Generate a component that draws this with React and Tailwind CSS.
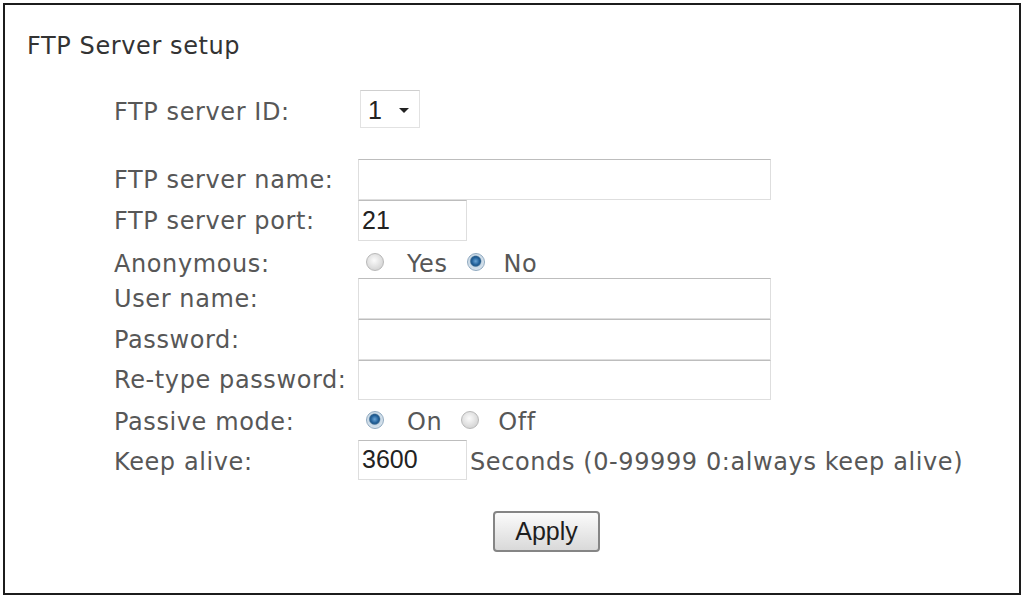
// FTP Server setup form
const LABEL = 'text-[#575757] text-[24px] leading-[30px] tracking-[0.6px]';
const ARIAL = "font-['Liberation_Sans',Arial,sans-serif]";

function Radio({ checked }) {
  return checked ? (
    <span className="inline-block w-[18px] h-[18px] rounded-full border border-[#8fa9c0] bg-[radial-gradient(circle_at_48%_45%,#6aa5d6_0%,#1f5d96_32%,#2b5f8c_40%,#c9d9e6_50%,#eef2f6_100%)]" />
  ) : (
    <span className="inline-block w-[18px] h-[18px] rounded-full border border-[#b8b8b8] bg-[radial-gradient(circle_at_45%_40%,#fbfbfb_0%,#e4e4e4_45%,#c8c8c8_100%)]" />
  );
}

function Field({ w = 'w-[413px]', h = 'h-[41px]', value = '' }) {
  return (
    <div className={`${w} ${h} border border-[#dedede] border-t-[#bdbdbd] bg-white flex items-center pl-[3px] text-[25px] text-[#222] ${ARIAL}`}>
      {value}
    </div>
  );
}

function Row({ label, h = 'h-[41px]', pad = '', children }) {
  return (
    <div className={`flex items-center ${h}`}>
      <div className={`w-[244px] ${LABEL} ${pad}`}>{label}</div>
      <div className="flex items-center">{children}</div>
    </div>
  );
}

function RadioPair({ first, second, firstOn }) {
  return (
    <div className={`flex items-center ${LABEL} pl-[8px]`}>
      <span className="flex -mt-[4px]"><Radio checked={firstOn} /></span>
      <span className="ml-[23px]">{first}</span>
      <span className="ml-[19px] flex -mt-[4px]"><Radio checked={!firstOn} /></span>
      <span className="ml-[19px]">{second}</span>
    </div>
  );
}

export default function App() {
  return (
    <div className="w-[1024px] h-[598px] bg-white p-[3px] font-['DejaVu_Sans',Verdana,sans-serif]">
      <div className="w-full h-full border-2 border-[#1c1c1c] pt-[26px] pl-[22px]">
        <div className="text-[24px] leading-[30px] tracking-[0.6px] text-[#333]">FTP Server setup</div>

        <div className="pl-[87px] mt-[29px]">
          <Row label="FTP server ID:" h="h-[38px]" pad="pt-[6px]">
            <div className={`w-[60px] h-[38px] ml-[2px] border border-[#e2e2e2] border-t-[#cfcfcf] flex items-center pl-[7px] text-[25px] text-[#222] ${ARIAL}`}>
              <span className="pt-[4px]">1</span>
              <svg className="ml-[17px] mt-[3px]" width="10" height="5" viewBox="0 0 10 5"><path d="M0 0h10L5 5z" fill="#222" /></svg>
            </div>
          </Row>

          <div className="mt-[31px]">
            <Row label="FTP server name:"><Field /></Row>
            <Row label="FTP server port:"><Field w="w-[109px]" value="21" /></Row>
            <Row label="Anonymous:" h="h-[37px]" pad="pt-[8px]">
              <div className="pt-[8px]">
                <RadioPair first="Yes" second="No" firstOn={false} />
              </div>
            </Row>
            <Row label="User name:"><Field /></Row>
            <Row label="Password:"><Field /></Row>
            <Row label="Re-type password:" h="h-[40px]"><Field h="h-[40px]" /></Row>
            <Row label="Passive mode:" h="h-[40px]" pad="pt-[3px]">
              <div className="pt-[3px]">
                <RadioPair first="On" second="Off" firstOn />
              </div>
            </Row>
            <Row label="Keep alive:" h="h-[40px]" pad="pt-[3px]">
              <Field w="w-[109px]" h="h-[40px]" value="3600" />
              <span className={`${LABEL} ml-[3px] pt-[3px]`}>Seconds (0-99999 0:always keep alive)</span>
            </Row>
          </div>

          <div className="flex pl-[379px] mt-[31px]">
            <button className={`w-[107px] h-[41px] rounded-[4px] border-2 border-[#858585] bg-[linear-gradient(#fbfbfb,#d9d9d9)] text-[25px] text-[#1e1e1e] ${ARIAL}`}>
              Apply
            </button>
          </div>
        </div>
      </div>
    </div>
  );
}
